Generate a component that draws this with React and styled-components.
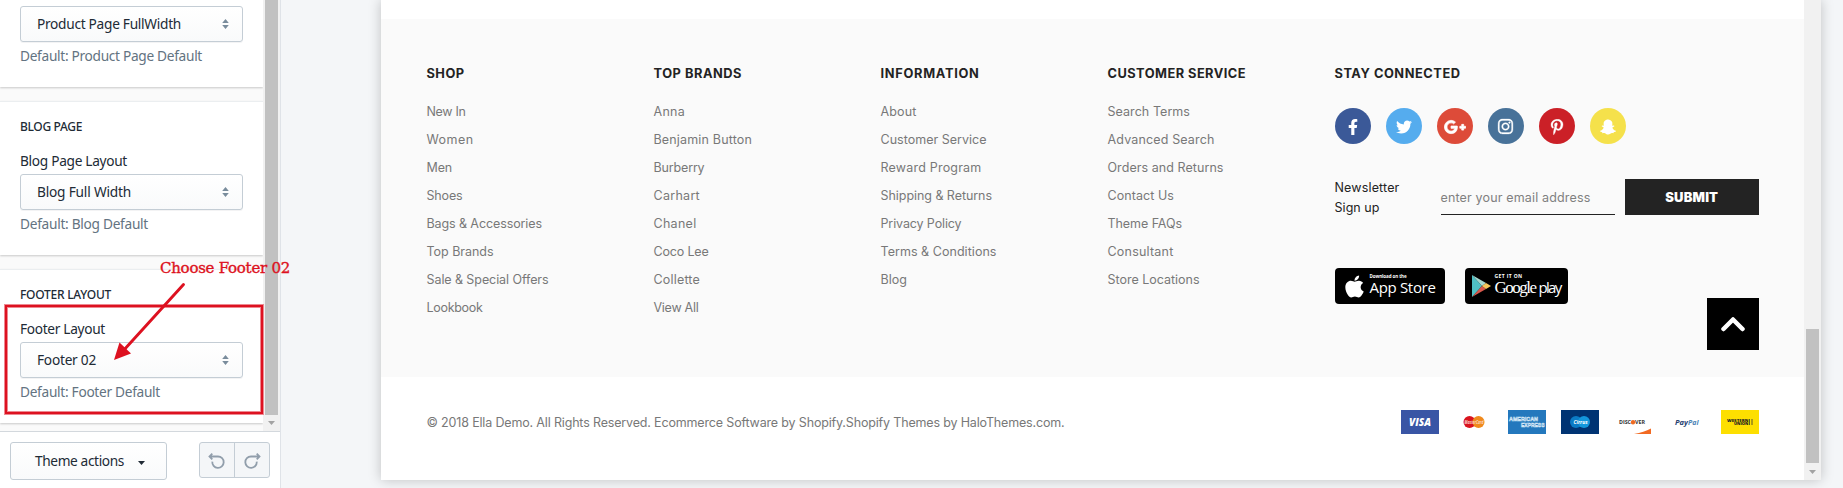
import React, { useLayoutEffect, useRef } from "react";
import styled, { createGlobalStyle } from "styled-components";
import { FaFacebookF, FaTwitter, FaGooglePlusG, FaInstagram, FaPinterestP, FaSnapchatGhost, FaApple } from "react-icons/fa";

const Global = createGlobalStyle`
  *, *::before, *::after { box-sizing: border-box; }
  html, body { margin: 0; overflow: hidden; background: #f4f6f8; }
`;

/* ---------- text set to a given measure ---------- */
const Measure = styled.span`
  display: inline-block;
  white-space: pre;
`;

function Fit({ w, children }) {
  const ref = useRef(null);
  useLayoutEffect(() => {
    const el = ref.current;
    el.style.letterSpacing = "0px";
    const natural = el.getBoundingClientRect().width;
    const gaps = Math.max(1, el.textContent.length);
    el.style.letterSpacing = (w - natural) / gaps + "px";
  }, [w, children]);
  return <Measure ref={ref}>{children}</Measure>;
}

/* ---------- shell ---------- */
const Page = styled.div`
  position: relative;
  display: flex;
  width: 1843px;
  height: 488px;
  overflow: hidden;
  background: #f4f6f8;
`;

const Sidebar = styled.aside`
  display: flex;
  flex-direction: column;
  width: 281px;
  flex: none;
  border-right: 1px solid #dfe3e8;
  background: #fafbfc;
  font-family: "Noto Sans", "Open Sans", sans-serif;
  color: #212b36;
`;

const SidebarBody = styled.div`
  display: flex;
  height: 431px;
  overflow: hidden;
`;

const Sections = styled.div`
  display: flex;
  flex-direction: column;
  gap: 14px;
  width: 263px;
  background: #fafafa;
`;

const Section = styled.section`
  flex: none;
  height: ${(p) => (p.$open ? 87 : 154)}px;
  padding: ${(p) => (p.$open ? 6 : 15)}px 20px 0;
  background: #fff;
  border-top: ${(p) => (p.$open ? "0" : "1px solid #ebeef0")};
  box-shadow: 0 1px 2px rgba(0, 0, 0, 0.2);
`;

const SectionTitle = styled.h2`
  margin: 0 0 14px;
  font-size: 12px;
  font-weight: 500;
  line-height: 20px;
`;

const Label = styled.div`
  margin-bottom: 3px;
  font-size: 13.7px;
  line-height: 20px;
`;

const SelectBox = styled.div`
  display: flex;
  align-items: center;
  justify-content: space-between;
  height: 36px;
  padding: 0 13px 0 16px;
  border: 1px solid #c4cdd5;
  border-radius: 3px;
  background: linear-gradient(#fff, #f9fafb);
  box-shadow: 0 1px 0 rgba(22, 29, 37, 0.05);
  font-size: 13.7px;
  line-height: 34px;
  & > span { margin-top: -1px; }
`;

const Hint = styled.div`
  margin-top: 4px;
  font-size: 13.7px;
  line-height: 20px;
  color: #637381;
`;

const Rail = styled.div`
  display: flex;
  flex-direction: column;
  justify-content: flex-end;
  align-items: center;
  width: 17px;
  height: ${(p) => p.$height}px;
  background: #f1f1f1;
`;

const Thumb = styled.div`
  width: 13px;
  height: ${(p) => p.$height}px;
  background: #c1c1c1;
`;

const RailEnd = styled.div`
  display: flex;
  align-items: center;
  justify-content: center;
  height: 17px;
`;

const Actions = styled.div`
  display: flex;
  justify-content: space-between;
  align-items: flex-start;
  height: 57px;
  padding: 10px 10px 0;
  background: #fff;
  border-top: 1px solid #d3d8dd;
`;

const ThemeButton = styled.div`
  display: flex;
  align-items: center;
  gap: 14px;
  width: 157px;
  height: 38px;
  padding-left: 24px;
  border: 1px solid #c4cdd5;
  border-radius: 3px;
  background: linear-gradient(#fff, #f9fafb);
  font-size: 13.7px;
  & > span { margin-top: -2px; }
  & > svg { margin-top: 3px; }
`;

const History = styled.div`
  display: flex;
  height: 36px;
  border: 1px solid #c4cdd5;
  border-radius: 3px;
  background: #f4f6f8;
`;

const HistoryButton = styled.div`
  display: flex;
  align-items: center;
  justify-content: center;
  width: 34px;
  & + & { width: 35px; border-left: 1px solid #c4cdd5; }
`;

/* ---------- storefront preview ---------- */
const Preview = styled.main`
  display: flex;
  width: 1440px;
  height: 480px;
  margin-left: 100px;
  background: #fff;
  box-shadow: 0 0 12px rgba(0, 0, 0, 0.22);
  font-family: Inter, sans-serif;
`;

const Store = styled.div`
  width: 1423px;
  padding-top: 19px;
`;

const FooterTop = styled.footer`
  display: flex;
  height: 358px;
  padding: 45px 45px 0 45.5px;
  background: #fafafa;
`;

const Column = styled.div`
  width: 227px;
  flex: none;
`;

const Connect = styled.div`
  flex: 1;
`;

const Heading = styled.h3`
  margin: 0 0 14px;
  font-size: 12.8px;
  font-weight: 700;
  line-height: 20px;
  color: #232323;
`;

const FooterLink = styled.a`
  display: block;
  font-size: 12.5px;
  line-height: 28px;
  color: #787878;
`;

const SocialRow = styled.div`
  display: flex;
  gap: 15px;
  margin-top: 24px;
`;

const Social = styled.span`
  display: flex;
  align-items: center;
  justify-content: center;
  width: 36px;
  height: 36px;
  padding-top: 1px;
  border-radius: 50%;
  background: ${(p) => p.$bg};
  color: #fff;
  font-size: ${(p) => p.$size || 16}px;
  & path { stroke: #fff; stroke-width: ${(p) => p.$bold || 0}; }
`;

const Newsletter = styled.div`
  display: flex;
  height: 36px;
  margin-top: 35px;
`;

const NewsLabel = styled.div`
  width: 106px;
  margin-top: -1px;
  font-size: 12.5px;
  line-height: 20px;
  color: #232323;
`;

const Email = styled.div`
  width: 174px;
  height: 36px;
  margin-right: 10px;
  border-bottom: 1px solid #232323;
  font-size: 12.5px;
  line-height: 37px;
  color: #808080;
`;

const Submit = styled.div`
  flex: 1;
  background: #232323;
  color: #fff;
  font-size: 13px;
  font-weight: 900;
  line-height: 37px;
  text-align: center;
`;

const Lower = styled.div`
  display: flex;
  align-items: flex-start;
  margin-top: 53px;
`;

const Badge = styled.div`
  display: flex;
  align-items: center;
  width: ${(p) => p.$width}px;
  height: 36px;
  margin-right: 20px;
  padding-left: 7px;
  gap: ${(p) => p.$gap}px;
  border-radius: 4px;
  background: #000;
  color: #fff;
`;

const BadgeText = styled.div`
  display: flex;
  flex-direction: column;
`;

const Tiny = styled.span`
  font: 700 ${(p) => p.$size}px/6px "Open Sans", sans-serif;
  height: 6px;
`;

const BadgeName = styled.span`
  display: flex;
  align-items: baseline;
  gap: 3px;
  font: 500 15px/17px "Open Sans", sans-serif;
  height: 20px;
`;

const SerifName = styled.span`
  font: 17px/17px "Liberation Serif", serif;
`;

const ToTop = styled.div`
  display: flex;
  align-items: center;
  justify-content: center;
  width: 52px;
  height: 52px;
  margin: 30px 0 0 auto;
  background: #000;
`;

const FooterBottom = styled.div`
  display: flex;
  align-items: center;
  justify-content: space-between;
  height: 90px;
  padding: 0 45px 0 45.5px;
  font-size: 12.5px;
  color: #787878;
`;

const Cards = styled.div`
  display: flex;
  gap: 15.3px;
`;

const CardArt = styled.svg`
  display: block;
  width: 38px;
  height: 24px;
`;

/* ---------- annotation over the page ---------- */
const Highlight = styled.div`
  position: absolute;
  left: 5px;
  top: 305px;
  width: 258px;
  height: 109px;
  border: 2px solid #dd1120;
  box-shadow: 0 0 0 1px #ee8890, inset 0 0 0 1px #ee8890;
`;

const Note = styled.div`
  position: absolute;
  left: 160px;
  top: 258px;
  font: 500 15px/20px "DejaVu Serif", serif;
  -webkit-text-stroke: 0.35px #dd1120;
  color: #dd1120;
`;

const NoteArrow = styled.svg`
  position: absolute;
  left: 110px;
  top: 280px;
`;

/* ---------- small parts ---------- */
const Sorter = () => (
  <svg width="7" height="10" viewBox="0 0 7 10" fill="#798c9c">
    <path d="M3.5 0 6.8 4H.2zM3.5 10 .2 6h6.6z" />
  </svg>
);

const DownArrow = () => (
  <svg width="7" height="4" viewBox="0 0 7 4" fill="#a3a3a3"><path d="M0 0h7L3.5 4z" /></svg>
);

const HistoryIcon = ({ flip }) => (
  <svg width="18" height="18" viewBox="0 0 18 18" fill="none" stroke="#919eab" strokeWidth="1.8" transform={flip ? "scale(-1 1)" : undefined}>
    <path d="M1.5 5.500H10a5.700 5.700 0 1 1-5.700 5.200M4.300 2.700 1.500 5.500l2.800 2.800" />
  </svg>
);

const sections = [
  { value: "Product Page FullWidth", vw: 144, hint: "Default: Product Page Default", hw: 182 },
  { title: "BLOG PAGE", tw: 62, label: "Blog Page Layout", lw: 107, value: "Blog Full Width", vw: 94, hint: "Default: Blog Default", hw: 128 },
  { title: "FOOTER LAYOUT", tw: 91, label: "Footer Layout", lw: 85, value: "Footer 02", vw: 59, hint: "Default: Footer Default", hw: 140 },
];

const columns = [
  { head: ["SHOP", 38], links: [["New In", 39], ["Women", 47], ["Men", 25.5], ["Shoes", 36], ["Bags & Accessories", 115.5], ["Top Brands", 67], ["Sale & Special Offers", 122], ["Lookbook", 56]] },
  { head: ["TOP BRANDS", 88.5], links: [["Anna", 31.5], ["Benjamin Button", 98.5], ["Burberry", 51], ["Carhart", 46.5], ["Chanel", 43], ["Coco Lee", 55], ["Collette", 46.5], ["View All", 45]] },
  { head: ["INFORMATION", 99], links: [["About", 36], ["Customer Service", 106], ["Reward Program", 101], ["Shipping & Returns", 111.5], ["Privacy Policy", 81], ["Terms & Conditions", 116], ["Blog", 26.5]] },
  { head: ["CUSTOMER SERVICE", 138.5], links: [["Search Terms", 82.5], ["Advanced Search", 107], ["Orders and Returns", 116], ["Contact Us", 66.5], ["Theme FAQs", 74.5], ["Consultant", 66], ["Store Locations", 92]] },
];

const PaymentCards = () => (
  <Cards>
    <CardArt viewBox="0 0 38 24">
      <rect width="38" height="24" fill="#3955a5" />
      <text x="8" y="16" fontFamily="Open Sans" fontSize="10.5" fontWeight="800" fontStyle="italic" fill="#fff" textLength="22" lengthAdjust="spacingAndGlyphs">VISA</text>
    </CardArt>
    <CardArt viewBox="0 0 38 24">
      <circle cx="14.5" cy="12" r="6" fill="#d9141e" />
      <circle cx="23.5" cy="12" r="6" fill="#f08a1c" />
      <text x="9.5" y="13.7" fontFamily="Open Sans" fontSize="4.3" fontWeight="700" fontStyle="italic" fill="#fbd6c4" textLength="19" lengthAdjust="spacingAndGlyphs">MasterCard</text>
    </CardArt>
    <CardArt viewBox="0 0 38 24">
      <rect width="38" height="24" fill="#2478bd" />
      <text x="1" y="11.2" fontFamily="Liberation Sans" fontSize="6" fontWeight="700" fill="#2478bd" stroke="#d3e6f5" strokeWidth=".6" textLength="29" lengthAdjust="spacingAndGlyphs">AMERICAN</text>
      <text x="13" y="17.2" fontFamily="Liberation Sans" fontSize="6" fontWeight="700" fill="#2478bd" stroke="#d3e6f5" strokeWidth=".6" textLength="23.5" lengthAdjust="spacingAndGlyphs">EXPRESS</text>
    </CardArt>
    <CardArt viewBox="0 0 38 24">
      <rect width="38" height="24" fill="#003473" />
      <circle cx="15" cy="12" r="6" fill="#0b7bc6" />
      <circle cx="23" cy="12" r="6" fill="#1397dc" />
      <text x="12.5" y="14" fontFamily="Open Sans" fontSize="5" fontWeight="700" fontStyle="italic" fill="#fff" textLength="14" lengthAdjust="spacingAndGlyphs">Cirrus</text>
    </CardArt>
    <CardArt viewBox="0 0 38 24">
      <text x="5" y="14.4" fontFamily="Open Sans" fontSize="6" fontWeight="700" fill="#333" textLength="12" lengthAdjust="spacingAndGlyphs">DISC</text>
      <circle cx="19" cy="12.3" r="2.2" fill="#ee6a22" />
      <text x="21" y="14.4" fontFamily="Open Sans" fontSize="6" fontWeight="700" fill="#333" textLength="10" lengthAdjust="spacingAndGlyphs">VER</text>
      <path d="M20 24c7-1 12-3 17-5.500V24z" fill="#f26a22" />
    </CardArt>
    <CardArt viewBox="0 0 38 24">
      <text x="7" y="14.7" fontFamily="Open Sans" fontSize="7.5" fontWeight="700" fontStyle="italic" fill="#24406f" textLength="13" lengthAdjust="spacingAndGlyphs">Pay</text>
      <text x="20" y="14.7" fontFamily="Open Sans" fontSize="7.5" fontWeight="700" fontStyle="italic" fill="#4b83b5" textLength="10.5" lengthAdjust="spacingAndGlyphs">Pal</text>
    </CardArt>
    <CardArt viewBox="0 0 38 24">
      <rect width="38" height="24" fill="#fddf00" />
      <text x="6" y="11.8" fontFamily="Open Sans" fontSize="4" fontWeight="800" fill="#222" textLength="21.5" lengthAdjust="spacingAndGlyphs">WESTERN</text>
      <text x="13" y="15.2" fontFamily="Open Sans" fontSize="4" fontWeight="800" fill="#222" textLength="14.5" lengthAdjust="spacingAndGlyphs">UNION</text>
      <path d="M28.500 9v6M31 9v6" stroke="#333" strokeWidth=".8" />
    </CardArt>
  </Cards>
);

export default function App() {
  return (
    <Page>
      <Global />
      <Sidebar>
        <SidebarBody>
          <Sections>
            {sections.map((s) => (
              <Section key={s.value} $open={!s.title}>
                {s.title && <SectionTitle><Fit w={s.tw}>{s.title}</Fit></SectionTitle>}
                {s.label && <Label><Fit w={s.lw}>{s.label}</Fit></Label>}
                <SelectBox><Fit w={s.vw}>{s.value}</Fit><Sorter /></SelectBox>
                <Hint><Fit w={s.hw}>{s.hint}</Fit></Hint>
              </Section>
            ))}
          </Sections>
          <Rail $height={431}>
            <Thumb $height={440} />
            <RailEnd><DownArrow /></RailEnd>
          </Rail>
        </SidebarBody>
        <Actions>
          <ThemeButton>
            <Fit w={89}>Theme actions</Fit>
            <svg width="7" height="4" viewBox="0 0 7 4" fill="#212b36"><path d="M0 0h7L3.500 4z" /></svg>
          </ThemeButton>
          <History>
            <HistoryButton><HistoryIcon /></HistoryButton>
            <HistoryButton><HistoryIcon flip /></HistoryButton>
          </History>
        </Actions>
      </Sidebar>

      <Preview>
        <Store>
          <FooterTop>
            {columns.map((c) => (
              <Column key={c.head[0]}>
                <Heading><Fit w={c.head[1]}>{c.head[0]}</Fit></Heading>
                {c.links.map(([t, w]) => (
                  <FooterLink key={t}><Fit w={w}>{t}</Fit></FooterLink>
                ))}
              </Column>
            ))}
            <Connect>
              <Heading><Fit w={126}>STAY CONNECTED</Fit></Heading>
              <SocialRow>
                <Social $bg="#3b5998"><FaFacebookF /></Social>
                <Social $bg="#55acee"><FaTwitter /></Social>
                <Social $bg="#dd4b39" $size={22} $bold={22}><FaGooglePlusG /></Social>
                <Social $bg="#487299" $size={17} $bold={10}><FaInstagram /></Social>
                <Social $bg="#cb2027" $bold={10}><FaPinterestP /></Social>
                <Social $bg="#f5e14b"><FaSnapchatGhost /></Social>
              </SocialRow>
              <Newsletter>
                <NewsLabel>
                  <Fit w={65}>Newsletter</Fit><br />
                  <Fit w={45}>Sign up</Fit>
                </NewsLabel>
                <Email><Fit w={150}>enter your email address</Fit></Email>
                <Submit><Fit w={53}>SUBMIT</Fit></Submit>
              </Newsletter>
              <Lower>
                <Badge $width={110} $gap={3}>
                  <FaApple size={25} />
                  <BadgeText>
                    <Tiny $size={4.5}><Fit w={37}>Download on the</Fit></Tiny>
                    <BadgeName><Fit w={66}>App Store</Fit></BadgeName>
                  </BadgeText>
                </Badge>
                <Badge $width={103} $gap={4}>
                  <svg width="19" height="22" viewBox="0 0 19 22">
                    <path d="M0 0v22l10-11z" fill="#4fc0c4" />
                    <path d="M0 0l14 8-4 3z" fill="#a5d8cf" />
                    <path d="M0 22l14-8-4-3z" fill="#d9584c" />
                    <path d="M14 8l5 3-5 3-4-3z" fill="#f6c65b" />
                  </svg>
                  <BadgeText>
                    <Tiny $size={5}><Fit w={28}>GET IT ON</Fit></Tiny>
                    <BadgeName>
                      <SerifName><Fit w={41}>Google</Fit></SerifName>
                      <Fit w={22}>play</Fit>
                    </BadgeName>
                  </BadgeText>
                </Badge>
                <ToTop>
                  <svg width="24" height="16" viewBox="0 0 24 16" fill="none" stroke="#fff" strokeWidth="4.5" strokeLinecap="round" strokeLinejoin="round">
                    <path d="M2.500 13 12 3.500 21.500 13" />
                  </svg>
                </ToTop>
              </Lower>
            </Connect>
          </FooterTop>
          <FooterBottom>
            <Fit w={638}>© 2018 Ella Demo. All Rights Reserved. Ecommerce Software by Shopify.Shopify Themes by HaloThemes.com.</Fit>
            <PaymentCards />
          </FooterBottom>
        </Store>
        <Rail $height={480}>
          <Thumb $height={134} />
          <RailEnd><DownArrow /></RailEnd>
        </Rail>
      </Preview>

      <Highlight />
      <Note><Fit w={130}>Choose Footer 02</Fit></Note>
      <NoteArrow width="80" height="86" viewBox="0 0 80 86">
        <path d="M73.500 4.500 13 71" stroke="#dd1120" strokeWidth="2.900" strokeLinecap="round" />
        <path d="M4 80 9.500 62.500 21 73.500z" fill="#dd1120" />
      </NoteArrow>
    </Page>
  );
}
